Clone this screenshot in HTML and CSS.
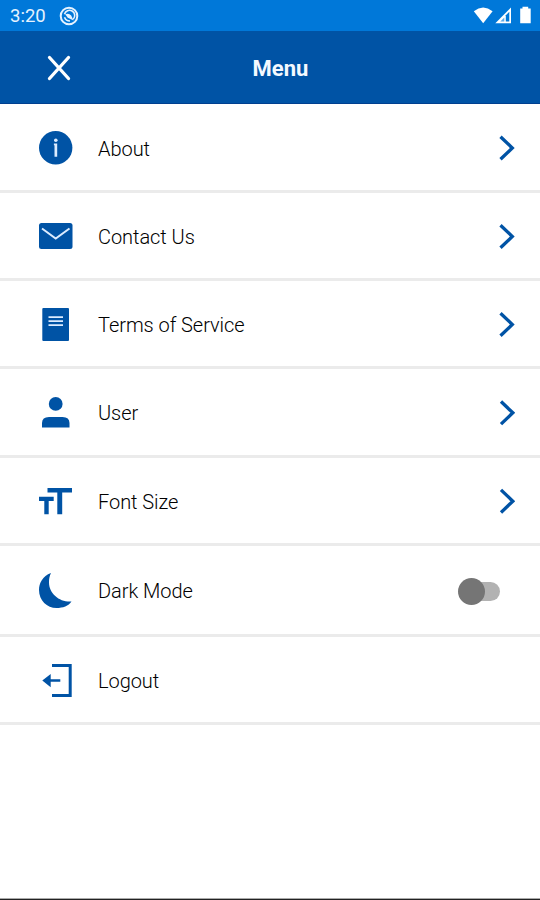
FILE: index.html
```html
<!DOCTYPE html>
<html lang="en">
<head>
    <meta charset="UTF-8">
    <title>Menu</title>
    <link rel="stylesheet" href="styles.css">
</head>
<body>
    <div class="status-bar">
        <span class="time">3:20</span>
        <svg class="status-app" width="20" height="20" viewBox="0 0 20 20" fill="none" stroke="#e6f3ff">
            <circle cx="10" cy="10" r="8.3" stroke-width="2"/>
            <path d="M5.5 8.2A5.2 5.2 0 1 1 14.2 13.2M5.5 11.2Q7 15 11 15" stroke-width="1.6"/>
            <path d="M6.2 8.5Q9.5 6.5 12.2 9.5L14.5 14.5L10.5 12.5Q8.5 12 7.5 10Z" fill="#e6f3ff" stroke="none"/>
        </svg>
        <svg class="status-icons" width="60" height="20" viewBox="0 0 60 20" fill="#fff">
            <path d="M.8 5.2Q10.2 -2.2 19.6 5.2L10.2 17.2Z"/>
            <path d="M38 1.5V17.2H22.3Z"/>
            <path d="M32.8 9.3V15.6H36.3V5.8Z" fill="#0078d9"/>
            <path d="M27.3 15.6L31.3 11.6V15.6Z" fill="#5fabe9"/>
            <path d="M49.5 2.5H47.2V17.3H57.7V2.5H55.2V.8H49.5Z"/>
        </svg>
    </div>

    <header class="header">
        <svg class="close" width="24" height="26" viewBox="0 0 24 26" stroke="#fff" stroke-width="3.3" stroke-linecap="round">
            <path d="M2.5 2.5L21.5 23.5M21.5 2.5L2.5 23.5"/>
        </svg>
        <h1>Menu</h1>
    </header>

    <ul class="menu">
        <li>
            <svg class="icon" viewBox="0 0 36 36">
                <circle cx="17.7" cy="17.8" r="16.7"/>
                <circle cx="17.8" cy="10.2" r="1.8" fill="#dcecff"/>
                <path d="M15.9 13.5H19.2V26.7H16.5V15.2H15.9Z" fill="#dcecff"/>
            </svg>
            <span class="label">About</span>
            <svg class="arrow" viewBox="0 0 18 28"><path d="M3.5 2.7L15.3 14L3.5 25.3"/></svg>
        </li>
        <li>
            <svg class="icon" viewBox="0 0 36 36">
                <rect x="1" y="4" width="33.5" height="26" rx="2.5"/>
                <path d="M4 9.5L17.7 19.5L31.5 9.5" fill="none" stroke="#dcecff" stroke-width="2"/>
            </svg>
            <span class="label">Contact Us</span>
            <svg class="arrow" viewBox="0 0 18 28"><path d="M3.5 2.2L15.3 13.5L3.5 24.8"/></svg>
        </li>
        <li>
            <svg class="icon" viewBox="0 0 36 36">
                <rect x="4.3" y="1" width="26.7" height="33" rx="1"/>
                <path d="M10.5 10.2H25M10.5 14.2H25M10.5 18.2H25" stroke="#dcecff" stroke-width="1.7"/>
            </svg>
            <span class="label">Terms of Service</span>
            <svg class="arrow" viewBox="0 0 18 28"><path d="M3.5 2.2L15.3 13.5L3.5 24.8"/></svg>
        </li>
        <li class="tall">
            <svg class="icon" viewBox="0 0 36 36">
                <circle cx="17.7" cy="8.9" r="6.9"/>
                <path d="M4 32.5V28Q4 22 11 22H24.5Q31.5 22 31.5 28V32.5Z"/>
            </svg>
            <span class="label">User</span>
            <svg class="arrow" viewBox="0 0 18 28"><path d="M4 2.5L15.8 13.8L4 25.1"/></svg>
        </li>
        <li>
            <svg class="icon" viewBox="0 0 36 36">
                <path d="M9.5 4H34V8.5H24.2V30.2H19.3V8.5H9.5Z"/>
                <path d="M1 12.7H15.7V17H10.7V30.2H6.3V17H1Z"/>
            </svg>
            <span class="label">Font Size</span>
            <svg class="arrow" viewBox="0 0 18 28"><path d="M4 1.9L15.8 13.2L4 24.5"/></svg>
        </li>
        <li class="dark">
            <svg class="icon" viewBox="0 0 36 36">
                <path d="M13 0C4.5 3 1 10.5 1 17C1 27.5 9 35 18.5 35C25 35 30.5 33 33.5 28.5C22 29.5 11 21 11 9.5C11 5.5 11.5 3 13 0Z"/>
            </svg>
            <span class="label">Dark Mode</span>
            <span class="switch"></span>
        </li>
        <li>
            <svg class="icon" viewBox="0 0 36 36">
                <path d="M14 2.5H32.2V32.5H14" fill="none" stroke="#0053a5" stroke-width="3"/>
                <path d="M4.3 17.5L12.7 11V16.3H22.3V18.8H12.7V24.2Z"/>
            </svg>
            <span class="label">Logout</span>
        </li>
    </ul>
    <div class="nav-line"></div>
</body>
</html>
```
FILE: styles.css
```css
* {
    box-sizing: border-box;
}
body {
    margin: 0;
    height: 900px;
    display: flex;
    flex-direction: column;
    background: #fff;
    font-family: Roboto, sans-serif;
    overflow: hidden;
}
.status-bar {
    height: 31px;
    display: flex;
    align-items: center;
    padding: 0 7px 0 10px;
    background: #0078d9;
    color: #e6f3ff;
}
.time {
    width: 49px;
    padding-top: 1px;
    font-size: 18.5px;
}
.status-icons {
    margin-left: auto;
}
.header {
    height: 73px;
    display: grid;
    grid-template-columns: 47px 1fr 26px;
    align-items: center;
    background: #0053a5;
    border-bottom: 1px solid #003f8f;
}
.close {
    grid-area: 1 / 2;
    margin-top: 2px;
}
.header h1 {
    grid-area: 1 / 1 / 2 / 4;
    margin: 0;
    padding: 2px 0 0 21px;
    color: #f4f9ff;
    font-size: 22px;
    text-align: center;
}
.menu {
    list-style: none;
    margin: 0;
    padding: 0;
}
.menu li {
    height: 88px;
    display: flex;
    align-items: center;
    padding: 2px 25px 0 38px;
    border-bottom: 3px solid #ebebeb;
}
.menu li:first-child,
.menu li.tall {
    height: 89px;
}
.menu li.dark {
    height: 91px;
    padding-right: 40px;
}
.icon {
    width: 36px;
    height: 36px;
    margin-right: 24px;
    fill: #0053a5;
}
.label {
    flex: 1;
    padding-top: 1px;
    color: #000;
    font-size: 20px;
    font-weight: 300;
    letter-spacing: -0.05px;
}
.tall .label,
.dark .label {
    padding-top: 0;
}
.arrow {
    width: 18px;
    height: 28px;
    fill: none;
    stroke: #0053a5;
    stroke-width: 3.3;
}
.switch {
    position: relative;
    width: 38px;
    height: 19px;
    border-radius: 10px;
    background: #b2b2b2;
}
.switch::before {
    content: "";
    position: absolute;
    left: -4px;
    top: -4px;
    width: 27px;
    height: 27px;
    border-radius: 50%;
    background: #757575;
}
.nav-line {
    height: 2px;
    margin-top: auto;
    background: #222;
    border-top: 1px solid #aaa;
}
```
